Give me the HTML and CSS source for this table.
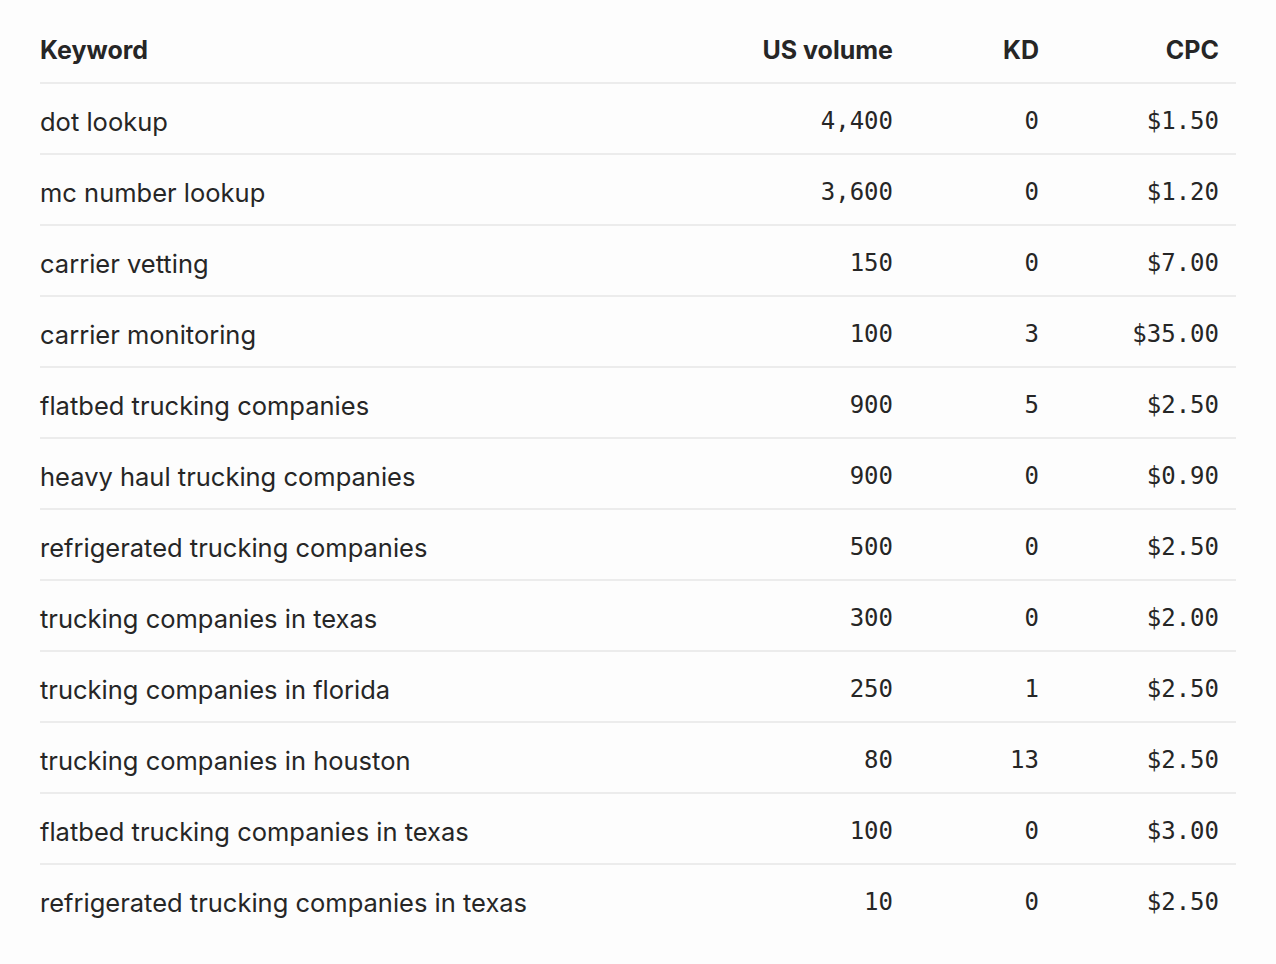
FILE: index.html
```html
<!DOCTYPE html>
<html lang="en">
<head>
<meta charset="utf-8">
<title>Keywords</title>
<link rel="stylesheet" href="styles.css">
</head>
<body>
<main class="page">
  <table class="kw-table">
    <thead>
      <tr>
        <th class="col-kw">Keyword</th>
        <th class="col-vol num">US volume</th>
        <th class="col-kd num">KD</th>
        <th class="col-cpc num">CPC</th>
      </tr>
    </thead>
    <tbody>
      <tr><td>dot lookup</td><td class="num mono">4,400</td><td class="num mono">0</td><td class="num mono">$1.50</td></tr>
      <tr><td>mc number lookup</td><td class="num mono">3,600</td><td class="num mono">0</td><td class="num mono">$1.20</td></tr>
      <tr><td>carrier vetting</td><td class="num mono">150</td><td class="num mono">0</td><td class="num mono">$7.00</td></tr>
      <tr><td>carrier monitoring</td><td class="num mono">100</td><td class="num mono">3</td><td class="num mono">$35.00</td></tr>
      <tr><td>flatbed trucking companies</td><td class="num mono">900</td><td class="num mono">5</td><td class="num mono">$2.50</td></tr>
      <tr><td>heavy haul trucking companies</td><td class="num mono">900</td><td class="num mono">0</td><td class="num mono">$0.90</td></tr>
      <tr><td>refrigerated trucking companies</td><td class="num mono">500</td><td class="num mono">0</td><td class="num mono">$2.50</td></tr>
      <tr><td>trucking companies in texas</td><td class="num mono">300</td><td class="num mono">0</td><td class="num mono">$2.00</td></tr>
      <tr><td>trucking companies in florida</td><td class="num mono">250</td><td class="num mono">1</td><td class="num mono">$2.50</td></tr>
      <tr><td>trucking companies in houston</td><td class="num mono">80</td><td class="num mono">13</td><td class="num mono">$2.50</td></tr>
      <tr><td>flatbed trucking companies in texas</td><td class="num mono">100</td><td class="num mono">0</td><td class="num mono">$3.00</td></tr>
      <tr><td>refrigerated trucking companies in texas</td><td class="num mono">10</td><td class="num mono">0</td><td class="num mono">$2.50</td></tr>
    </tbody>
  </table>
</main>
</body>
</html>
```
FILE: styles.css
```css
html, body {
  margin: 0;
  padding: 0;
  background: #fdfdfd;
}

body {
  font-family: Inter, "Noto Sans", "Liberation Sans", sans-serif;
  color: #262626;
}

.page {
  padding: 16px 40px 0 40px;
}

.kw-table {
  width: 100%;
  border-collapse: collapse;
  font-size: 25.5px;
}

.kw-table th,
.kw-table td {
  padding: 0;
  text-align: left;
  vertical-align: middle;
  border-bottom: 2px solid #ececec;
}

.kw-table td {
  height: 64px;
  padding-top: 5px;
  font-weight: 400;
}

.kw-table tbody tr:last-child td {
  border-bottom: none;
}

.kw-table th {
  font-weight: 700;
  font-size: 25px;
  height: 64px;
  padding-top: 2px;
}

.kw-table .num {
  text-align: right;
}

.kw-table .mono {
  font-family: "DejaVu Sans Mono", "Liberation Mono", monospace;
  font-size: 24px;
}

.col-kw { width: auto; }
.col-vol { width: 220px; }
.col-kd { width: 146px; }
.col-cpc { width: 180px; }

.kw-table th:last-child,
.kw-table td:last-child {
  padding-right: 17px;
}
```
